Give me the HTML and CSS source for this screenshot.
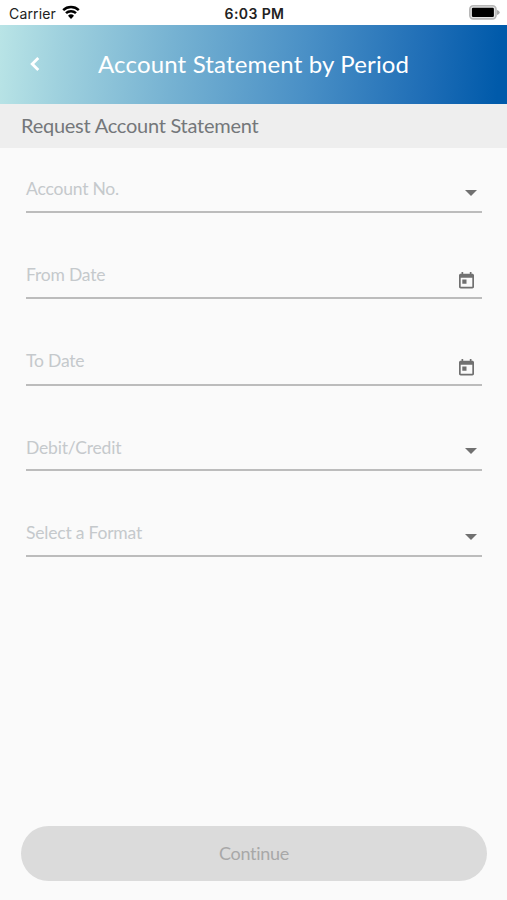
FILE: index.html
```html
<!DOCTYPE html>
<html lang="en">

<head>
    <meta charset="utf-8">
    <meta name="viewport" content="width=device-width, initial-scale=1">
    <title>Account Statement by Period</title>
    <link rel="stylesheet" href="styles.css">
</head>

<body>
    <!-- Phone status bar -->
    <div class="status">
        <div class="carrier">
            <span class="carrier-name">Carrier</span>
            <svg class="wifi" viewBox="0 0 18 14">
                <path d="M1.2 5.1a11.4 11.4 0 0 1 15.6 0" />
                <path d="M4 8.2a7.2 7.2 0 0 1 10 0" />
                <path class="wifi-dot" d="M9 13.9L6 10.7a4.3 4.3 0 0 1 6 0z" />
            </svg>
        </div>
        <span class="time">6:03 PM</span>
        <div class="power">
            <svg class="battery" viewBox="0 0 31 15">
                <rect class="battery-case" x=".8" y=".8" width="26.2" height="13.1" rx="3.4" />
                <rect x="2.9" y="2.8" width="22" height="9.2" rx="1.2" />
                <path class="battery-tip" d="M28 4.9q2.7.8 2.7 2.5T28 9.9z" />
            </svg>
        </div>
    </div>

    <header class="header">
        <svg class="back" viewBox="0 0 10 16">
            <path d="M8.3 2L2.2 8l6.1 6" />
        </svg>
        <h1 class="title">Account Statement by Period</h1>
    </header>

    <h2 class="subtitle">Request Account Statement</h2>

    <form class="form">
        <div class="field">
            <label class="label">Account No.</label>
            <svg class="arrow" viewBox="0 0 12 6"><path d="M0 0h12L6 6z" /></svg>
        </div>

        <div class="field">
            <label class="label">From Date</label>
            <svg class="calendar" viewBox="0 0 15 17">
                <path d="M13.3 1.7h-.8V0h-1.7v1.7H4.2V0H2.5v1.7h-.8C.8 1.7 0 2.4 0 3.3v11.5c0 .9.8 1.7 1.7 1.7h11.6c.9 0 1.7-.8 1.7-1.7V3.3c0-.9-.8-1.6-1.7-1.6zm0 13.1H1.7V5.8h11.6zM3.3 7.6h4.2v4.1H3.3z" fill-rule="evenodd" />
            </svg>
        </div>

        <div class="field field-tall">
            <label class="label">To Date</label>
            <svg class="calendar" viewBox="0 0 15 17">
                <path d="M13.3 1.7h-.8V0h-1.7v1.7H4.2V0H2.5v1.7h-.8C.8 1.7 0 2.4 0 3.3v11.5c0 .9.8 1.7 1.7 1.7h11.6c.9 0 1.7-.8 1.7-1.7V3.3c0-.9-.8-1.6-1.7-1.6zm0 13.1H1.7V5.8h11.6zM3.3 7.6h4.2v4.1H3.3z" fill-rule="evenodd" />
            </svg>
        </div>

        <div class="field field-short">
            <label class="label">Debit/Credit</label>
            <svg class="arrow" viewBox="0 0 12 6"><path d="M0 0h12L6 6z" /></svg>
        </div>

        <div class="field">
            <label class="label">Select a Format</label>
            <svg class="arrow" viewBox="0 0 12 6"><path d="M0 0h12L6 6z" /></svg>
        </div>
    </form>

    <footer class="footer">
        <button class="btn" disabled>Continue</button>
    </footer>
</body>

</html>
```

FILE: styles.css
```css
* {
    box-sizing: border-box;
}

body {
    background: #fafafa;
    display: flex;
    flex-direction: column;
    font-family: Lato, sans-serif;
    font-variant-ligatures: none;
    height: 100vh;
    margin: 0;
    overflow: hidden;
}

/* Status bar */
.status {
    align-items: center;
    background: white;
    color: #222;
    display: flex;
    flex: none;
    font-family: Inter, sans-serif;
    font-size: 14px;
    height: 25px;
    padding: 2px 7px 0 9px;
}

.carrier,
.power {
    align-items: center;
    display: flex;
    flex: 1;
}

.carrier {
    gap: 6px;
}

.carrier-name {
    letter-spacing: .15px;
}

.power {
    justify-content: flex-end;
}

.wifi {
    fill: none;
    height: 14px;
    margin-top: -3px;
    stroke: black;
    stroke-width: 2.5;
    width: 18px;
}

.wifi-dot {
    fill: black;
    stroke: none;
}

.time {
    font-weight: 600;
    letter-spacing: .4px;
}

.battery {
    height: 15px;
    margin-top: -2px;
    width: 31px;
}

.battery-case {
    fill: #e4e4e4;
    stroke: #b8b8b8;
    stroke-width: 1.6;
}

.battery-tip {
    fill: #aaa;
}

/* Header */
.header {
    align-items: center;
    background: linear-gradient(94deg, #b9e4e6 0%, #9fd1de 12%, #76b2d2 34%, #4a90c6 60%, #1e6db6 84%, #005aaa 98%);
    display: flex;
    flex: none;
    height: 79px;
    padding: 0 0 2px 30px;
}

.back {
    fill: none;
    height: 16px;
    stroke: white;
    stroke-width: 2.8;
    width: 10px;
}

.title {
    color: white;
    font-size: 24px;
    font-weight: normal;
    letter-spacing: .16px;
    margin: 0 0 0 58px;
    white-space: nowrap;
}

.subtitle {
    background: #eee;
    color: #74777a;
    flex: none;
    font-size: 20px;
    font-weight: normal;
    height: 44px;
    letter-spacing: -.25px;
    line-height: 42px;
    margin: 0;
    padding-left: 21px;
}

/* Form */
.form {
    display: flex;
    flex: 1;
    flex-direction: column;
    padding: 0 25px 0 26px;
}

.field {
    align-items: flex-end;
    border-bottom: 2px solid #bcbcbc;
    display: flex;
    height: 86px;
    justify-content: space-between;
}

.field:first-child {
    height: 65px;
}

.field-tall {
    height: 87px;
}

.field-short {
    height: 85px;
}

.label {
    color: #c5c9cc;
    font-size: 17.5px;
    letter-spacing: -.2px;
    line-height: 22px;
    padding-bottom: 11px;
}

.field-tall .label {
    padding-bottom: 12px;
}

.field-short .label {
    padding-bottom: 10px;
}

.arrow {
    fill: #707070;
    height: 6px;
    margin: 0 5px 15px 0;
    width: 12px;
}

.calendar {
    fill: #707070;
    height: 17px;
    margin: 0 8px 8px 0;
    width: 15px;
}

/* Button */
.footer {
    flex: none;
    padding: 0 20px 19px 21px;
}

.btn {
    background: #dbdbdb;
    border: none;
    border-radius: 28px;
    color: #a8a8a8;
    display: block;
    font-family: Lato, sans-serif;
    font-size: 18px;
    height: 55px;
    letter-spacing: -.3px;
    padding: 0 0 2px;
    width: 100%;
}
```
